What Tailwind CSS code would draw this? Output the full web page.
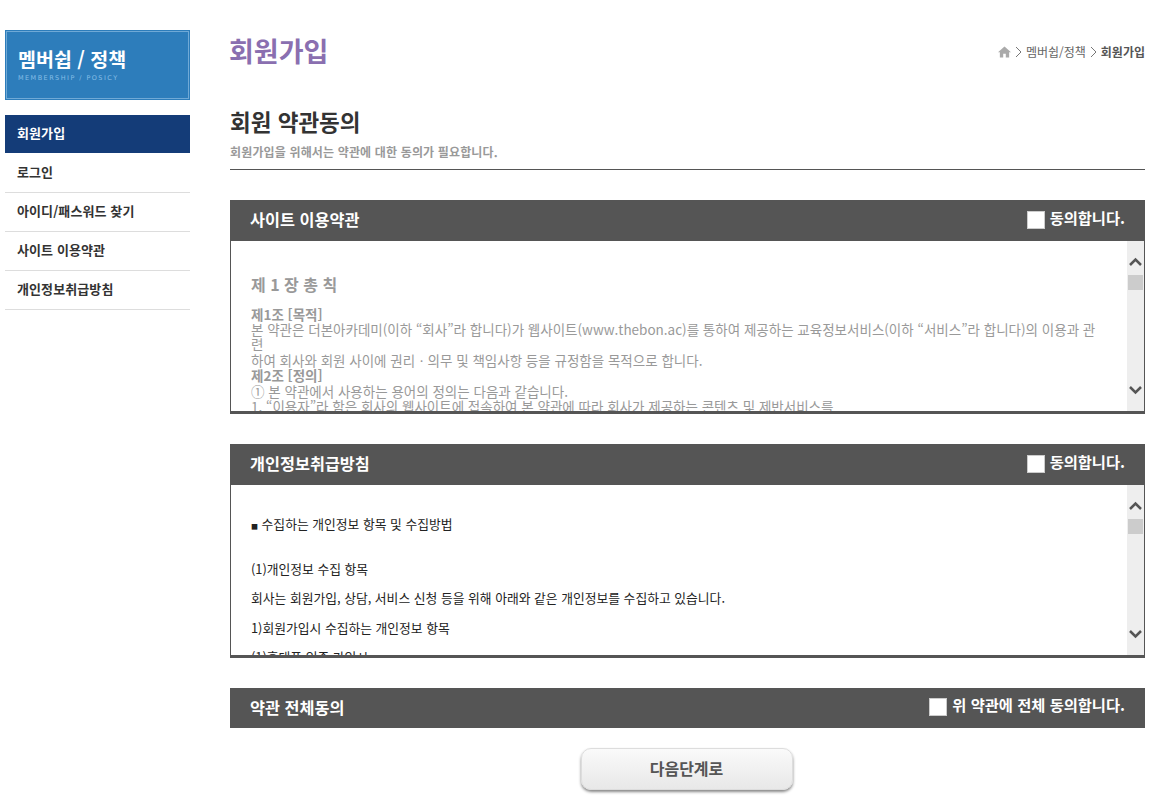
<!DOCTYPE html>
<html lang="ko"><head><meta charset="utf-8"><script src="https://cdn.jsdelivr.net/npm/@tailwindcss/browser@4"></script></head>
<body class="bg-white font-['Noto_Sans_CJK_KR','Noto_Sans',sans-serif] overflow-hidden">
<div class="flex h-[804px] w-[1166px] overflow-hidden">
<aside class="w-[230px] shrink-0 pl-[5px] pt-[30px]">
<div class="w-[185px] h-[70px] bg-[#2d7dbb] p-px"><div class="h-full border border-[#6fa9d6] pl-[11px] pt-[13px] text-white"><div class="text-[19.5px] leading-[28px] font-bold">멤버쉽 / 정책</div><div class="font-['DejaVu_Sans',sans-serif] text-[6.5px] leading-[10px] tracking-[1.45px] whitespace-nowrap text-[#86bde6]">MEMBERSHIP / POSICY</div></div></div>
<nav class="w-[185px] mt-[15px] text-[13px] font-bold tracking-[0.1px] text-[#333]">
<div class="h-[38px] bg-[#143c78] text-white flex items-center pl-3 pb-[2px]">회원가입</div>
<div class="h-[40px] border-b border-[#ddd] flex items-center pl-3 pb-[2px]">로그인</div>
<div class="h-[39px] border-b border-[#ddd] flex items-center pl-3 pb-[2px]">아이디/패스워드 찾기</div>
<div class="h-[39px] border-b border-[#ddd] flex items-center pl-3 pb-[2px]">사이트 이용약관</div>
<div class="h-[39px] border-b border-[#ddd] flex items-center pl-3 pb-[2px]">개인정보취급방침</div>
</nav>
</aside>
<main class="w-[915px] shrink-0">
<div class="h-[100px] flex justify-between pt-[31px]"><h1 class="-ml-px text-[27px] leading-[40px] font-bold text-[#8a6fb0]">회원가입</h1>
<div class="flex items-center h-[16px] mt-[13px] text-[12px] text-[#666] gap-[4px]">
<svg class="w-[13px] h-[12px]" viewBox="0 0 14 12"><path d="M7 0 0 6.200h2V12h3.600V8h2.800v4H12V6.200h2z" fill="#aaa"/></svg>
<svg class="w-[7px] h-[12px]" viewBox="0 0 7 12"><path d="M1 1l5 5-5 5" fill="none" stroke="#777"/></svg>
<span>멤버쉽/정책</span>
<svg class="w-[7px] h-[12px]" viewBox="0 0 7 12"><path d="M1 1l5 5-5 5" fill="none" stroke="#777"/></svg>
<b class="text-[#555]">회원가입</b></div></div>
<h2 class="mt-[5px] text-[22.5px] leading-[32px] font-bold text-[#333]">회원 약관동의</h2>
<p class="mt-[7px] text-[12px] tracking-[0.15px] leading-[16px] font-bold text-[#999]">회원가입을 위해서는 약관에 대한 동의가 필요합니다.</p>
<div class="mt-[9px] border-t border-[#555]"></div>

<section class="mt-[30px]">
<div class="h-[41px] bg-[#555] text-white flex items-center justify-between px-5"><h3 class="text-[16.3px] font-bold -mt-[2px]">사이트 이용약관</h3><label class="flex items-center gap-[5px] text-[15.3px] font-bold"><span class="w-[18px] h-[18px] -mt-[2px] bg-white border border-[#ccc]"></span><span class="-mt-[7px]">동의합니다.</span></label></div>
<div class="relative h-[173px] border-x border-b-[3px] border-[#555] overflow-hidden">
<div class="pl-5 pt-[31px] whitespace-nowrap text-[13.5px] leading-[15.4px] text-[#999]">
<div class="text-[16px] font-bold leading-[24px] mb-[10.5px]">제 1 장 총 칙</div>
<b>제1조 [목적]</b><br>
본 약관은 더본아카데미(이하 “회사”라 합니다)가 웹사이트(www.thebon.ac)를 통하여 제공하는 교육정보서비스(이하 “서비스”라 합니다)의 이용과 관<br>련<br>
하여 회사와 회원 사이에 권리ㆍ의무 및 책임사항 등을 규정함을 목적으로 합니다.<br>
<b>제2조 [정의]</b><br>
① 본 약관에서 사용하는 용어의 정의는 다음과 같습니다.<br>
1. “이용자”라 함은 회사의 웹사이트에 접속하여 본 약관에 따라 회사가 제공하는 콘텐츠 및 제반서비스를
</div>
<div class="absolute right-0 top-0 bottom-0 w-[17px] bg-[#eee]">
<svg class="absolute left-[2px] top-[16px] w-[13px] h-[10px]" viewBox="0 0 13 10"><path d="M1 8l5.500-5.500L12 8" fill="none" stroke="#555" stroke-width="2.500"/></svg>
<div class="absolute left-px top-[34px] w-[15px] h-[15px] bg-[#ccc]"></div>
<svg class="absolute left-[2px] bottom-[16px] w-[13px] h-[10px]" viewBox="0 0 13 10"><path d="M1 2l5.500 5.500L12 2" fill="none" stroke="#555" stroke-width="2.500"/></svg>
</div></div>
</section>

<section class="mt-[30px]">
<div class="h-[41px] bg-[#555] text-white flex items-center justify-between px-5"><h3 class="text-[16.3px] font-bold -mt-[2px]">개인정보취급방침</h3><label class="flex items-center gap-[5px] text-[15.3px] font-bold"><span class="w-[18px] h-[18px] -mt-[2px] bg-white border border-[#ccc]"></span><span class="-mt-[7px]">동의합니다.</span></label></div>
<div class="relative h-[173px] border-x border-b-[3px] border-[#555] overflow-hidden">
<div class="pl-5 pt-[24px] whitespace-nowrap text-[12.8px] leading-[29.500px] text-[#222]">
<div><span class="text-[7px]">■</span> 수집하는 개인정보 항목 및 수집방법</div>
<div class="mt-[12px]">(1)개인정보 수집 항목</div>
<div>회사는 회원가입, 상담, 서비스 신청 등을 위해 아래와 같은 개인정보를 수집하고 있습니다.</div>
<div>1)회원가입시 수집하는 개인정보 항목</div>
<div>(1)휴대폰 인증 가입시</div>
</div>
<div class="absolute right-0 top-0 bottom-0 w-[17px] bg-[#eee]">
<svg class="absolute left-[2px] top-[16px] w-[13px] h-[10px]" viewBox="0 0 13 10"><path d="M1 8l5.500-5.500L12 8" fill="none" stroke="#555" stroke-width="2.500"/></svg>
<div class="absolute left-px top-[34px] w-[15px] h-[15px] bg-[#ccc]"></div>
<svg class="absolute left-[2px] bottom-[16px] w-[13px] h-[10px]" viewBox="0 0 13 10"><path d="M1 2l5.500 5.500L12 2" fill="none" stroke="#555" stroke-width="2.500"/></svg>
</div></div>
</section>

<section class="mt-[30px]">
<div class="h-[40px] bg-[#555] text-white flex items-center justify-between px-5"><h3 class="text-[16.3px] font-bold -mt-[2px]">약관 전체동의</h3><label class="flex items-center gap-[5px] text-[15.3px] font-bold"><span class="w-[18px] h-[18px] -mt-[2px] bg-white border border-[#ccc]"></span><span class="-mt-[7px]">위 약관에 전체 동의합니다.</span></label></div>
</section>

<div class="flex justify-center mt-[20px]"><button class="-ml-[2px] w-[212px] h-[42px] rounded-[10px] border border-[#ddd] bg-gradient-to-b from-[#fafafa] to-[#e8e8e8] shadow-[0_2px_3px_#888] text-[16px] font-bold text-[#555] pb-[2px]">다음단계로</button></div>
</main>
</div>
</body></html>
